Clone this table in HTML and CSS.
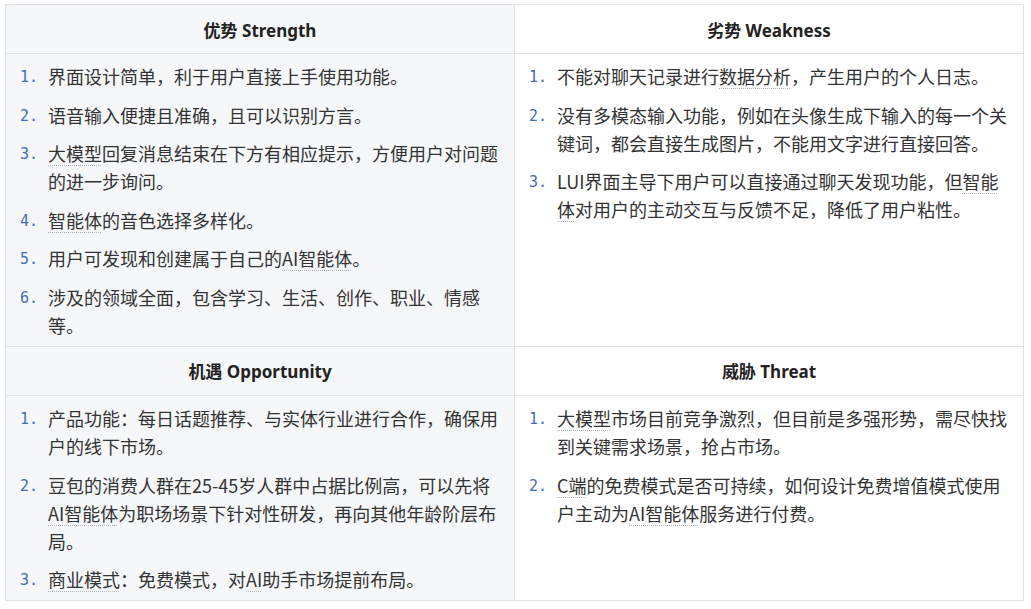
FILE: index.html
```html
<!DOCTYPE html>
<html lang="zh-CN">
<head>
<meta charset="utf-8">
<title>SWOT</title>
<link rel="stylesheet" href="styles.css">
</head>
<body>
<table class="swot">
  <colgroup><col class="col"><col class="col"></colgroup>
  <tr>
    <th class="shade">优势 Strength</th>
    <th>劣势 Weakness</th>
  </tr>
  <tr>
    <td class="shade">
      <ol class="items">
        <li><span>界面设计简单，利于用户直接上手使用功能。</span></li>
        <li><span>语音输入便捷且准确，且可以识别方言。</span></li>
        <li><span><u class="kw">大模型</u>回复消息结束在下方有相应提示，方便用户对问题的进一步询问。</span></li>
        <li><span><u class="kw">智能体</u>的音色选择多样化。</span></li>
        <li><span>用户可发现和创建属于自己的<u class="kw">AI智能体</u>。</span></li>
        <li><span>涉及的领域全面，包含学习、生活、创作、职业、情感等。</span></li>
      </ol>
    </td>
    <td>
      <ol class="items">
        <li><span>不能对聊天记录进行<u class="kw">数据分析</u>，产生用户的个人日志。</span></li>
        <li><span>没有多模态输入功能，例如在头像生成下输入的每一个关键词，都会直接生成图片，不能用文字进行直接回答。</span></li>
        <li><span>LUI界面主导下用户可以直接通过聊天发现功能，但<u class="kw">智能体</u>对用户的主动交互与反馈不足，降低了用户粘性。</span></li>
      </ol>
    </td>
  </tr>
  <tr>
    <th class="shade">机遇 Opportunity</th>
    <th>威胁 Threat</th>
  </tr>
  <tr>
    <td class="shade">
      <ol class="items">
        <li><span>产品功能：每日话题推荐、与实体行业进行合作，确保用户的线下市场。</span></li>
        <li><span>豆包的消费人群在25-45岁人群中占据比例高，可以先将<u class="kw">AI智能体</u>为职场场景下针对性研发，再向其他年龄阶层布局。</span></li>
        <li><span><u class="kw">商业模式</u>：免费模式，对<u class="kw">AI</u>助手市场提前布局。</span></li>
      </ol>
    </td>
    <td>
      <ol class="items">
        <li><span><u class="kw">大模型</u>市场目前竞争激烈，但目前是多强形势，需尽快找到关键需求场景，抢占市场。</span></li>
        <li><span><u class="kw">C端</u>的免费模式是否可持续，如何设计免费增值模式使用户主动为<u class="kw">AI智能体</u>服务进行付费。</span></li>
      </ol>
    </td>
  </tr>
</table>
</body>
</html>
```

FILE: styles.css
```css
html, body {
  margin: 0;
  padding: 0;
  background: #ffffff;
}

body {
  padding: 4px 0 0 5px;
  font-family: "Noto Sans", "Noto Sans CJK SC", sans-serif;
  color: #333333;
}

.swot {
  border-collapse: collapse;
  table-layout: fixed;
  width: 1018px;
}

.col {
  width: 509px;
}

.swot th,
.swot td {
  border: 1px solid #dfe2e6;
  background: #ffffff;
}

.swot .shade {
  background: #f6f7f9;
}

.swot th {
  height: 48px;
  padding: 0;
  font-size: 17px;
  font-weight: 700;
  color: #222222;
  text-align: center;
  vertical-align: middle;
}

.swot td {
  padding: 8px 10px 7px 14px;
  vertical-align: top;
}

.items {
  list-style: none;
  margin: 0;
  padding: 0;
  counter-reset: item;
  display: flex;
  flex-direction: column;
  gap: 10.6px;
}

.items li {
  counter-increment: item;
  display: flex;
  align-items: flex-start;
  font-size: 18px;
  line-height: 28px;
  font-family: "Noto Sans CJK SC", sans-serif;
  color: #333333;
}

.items li::before {
  content: counter(item) ".";
  flex: 0 0 28px;
  height: 28px;
  line-height: 30px;
  font-family: "DejaVu Sans Mono", "Liberation Mono", monospace;
  font-size: 15px;
  color: #3f6db3;
}

.items li span {
  flex: 1;
  min-width: 0;
}

.kw {
  text-decoration: underline dotted #b3b8bf;
  text-decoration-thickness: 1px;
  text-underline-offset: 4px;
}
```
